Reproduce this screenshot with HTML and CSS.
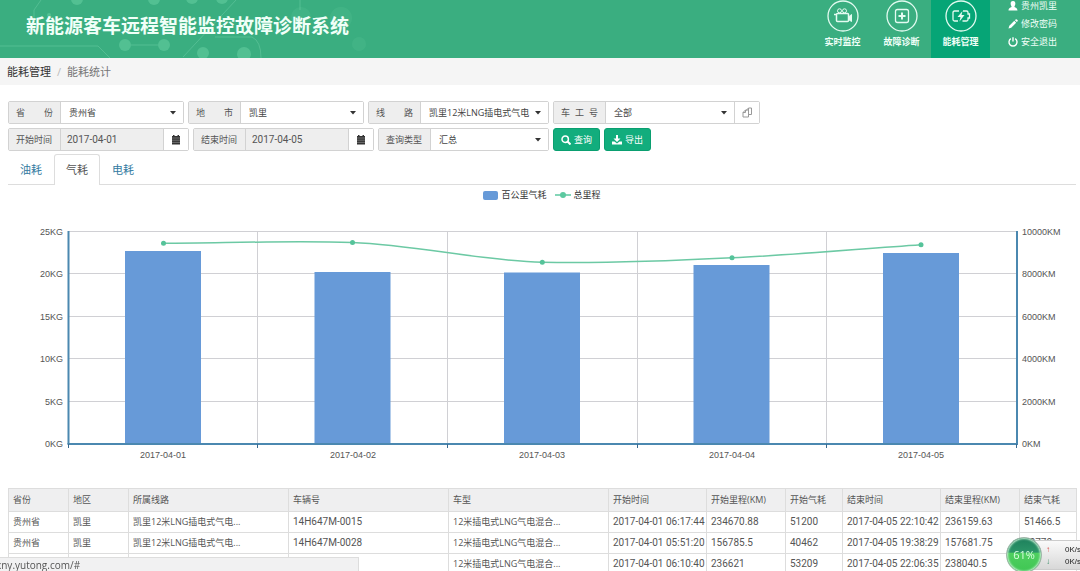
FILE: index.html
```html
<!DOCTYPE html>
<html lang="zh-CN">
<head>
    <meta charset="UTF-8">
    <meta name="viewport" content="width=device-width, initial-scale=1.0">
    <title>新能源客车远程智能监控故障诊断系统</title>
    <link rel="stylesheet" href="styles.css">
</head>
<body>

    <header class="header">
        <svg class="circuit" width="400" height="58" viewBox="0 0 400 58" aria-hidden="true">
            <g fill="none" stroke="#8ee0bd" stroke-opacity=".3">
                <path d="M34 20V10L41 0M0 46H98L110 58M131 45H158M183 57L236 0M215 37H252Q261 41 261 58M300 10V0"/>
            </g>
            <g fill="#7adcb0" fill-opacity=".38">
                <circle cx="77" cy="-1" r="6"/>
                <circle cx="154" cy="-1" r="6"/>
                <circle cx="192" cy="-2" r="6"/>
                <circle cx="222" cy="-2" r="6"/>
                <circle cx="49" cy="15" r="2"/>
                <circle cx="125" cy="45" r="6"/>
                <circle cx="164" cy="45" r="6"/>
                <circle cx="203" cy="53" r="6"/>
                <circle cx="244" cy="54" r="7"/>
            </g>
            <g fill="#7adcb0" fill-opacity=".12">
                <circle cx="301" cy="17" r="10"/>
                <circle cx="341" cy="18" r="11"/>
                <circle cx="359" cy="44" r="7"/>
            </g>
        </svg>
        <h1>新能源客车远程智能监控故障诊断系统</h1>

        <nav class="main-nav">
            <a href="#">
                <svg width="32" height="32" viewBox="0 0 32 32" fill="none" stroke="#e4fbf1">
                    <circle cx="16" cy="16" r="15" stroke-width="1.3"/>
                    <circle cx="12.500" cy="10.800" r="2"/>
                    <circle cx="17.500" cy="10.800" r="2"/>
                    <rect x="9.500" y="13.500" width="12" height="8" rx="1" stroke-width="1.500"/>
                    <path d="M21.500 17L24.500 14.500V21.500L21.500 19.500" fill="#e4fbf1"/>
                    <path d="M7 14.500H9.500" stroke-width="1.500"/>
                </svg>
                <span>实时监控</span>
            </a>
            <a href="#">
                <svg width="32" height="32" viewBox="0 0 32 32" fill="none" stroke="#e4fbf1">
                    <circle cx="16" cy="16" r="15" stroke-width="1.3"/>
                    <rect x="9.500" y="9.500" width="13" height="13" rx="2" stroke-width="1.3"/>
                    <path d="M16 12.500V19.500M12.500 16H19.500" stroke-width="2"/>
                </svg>
                <span>故障诊断</span>
            </a>
            <a href="#" class="active">
                <svg width="32" height="32" viewBox="0 0 32 32" fill="none" stroke="#e4fbf1">
                    <circle cx="16" cy="16" r="15" stroke-width="1.3"/>
                    <path d="M14 11H9.500Q8 11 8 12.500V19.500Q8 21 9.500 21H13M18 11H21.500Q23 11 23 12.500V14H24.500V18H23V19.500Q23 21 21.500 21H17.500" stroke-width="1.3"/>
                    <path d="M17.500 11L12.500 17H15.500L14.500 21.500L19.500 15H16.500Z" fill="#e4fbf1" stroke="none"/>
                </svg>
                <span>能耗管理</span>
            </a>
        </nav>

        <div class="user-menu">
            <a href="#">
                <svg width="10" height="10" viewBox="0 0 10 10" fill="#fff"><path d="M5 0C7 0 7.600 1.500 7.300 3.200C7.100 4.500 6.500 5 6.400 5.600C6.500 6.800 9.500 6.500 9.500 9.500H.5C.5 6.500 3.500 6.800 3.600 5.600C3.500 5 2.900 4.500 2.700 3.200C2.400 1.500 3 0 5 0Z"/></svg>
                贵州凯里
            </a>
            <a href="#">
                <svg width="10" height="10" viewBox="0 0 10 10" fill="#fff"><path d="M.5 9.500L1.300 6.800L6.300 1.800L8.200 3.700L3.200 8.700ZM6.900 1.200L7.900.3Q8.400 0 8.900.500L9.500 1.100Q10 1.600 9.600 2.200L8.800 3.100Z"/></svg>
                修改密码
            </a>
            <a href="#">
                <svg width="10" height="10" viewBox="0 0 10 10" fill="none" stroke="#fff" stroke-width="1.400"><path d="M2.800 1.700A4 4 0 1 0 7.200 1.700M5 .3V4.500"/></svg>
                安全退出
            </a>
        </div>
    </header>

    <!-- 面包屑 -->
    <div class="breadcrumb">
        <a href="#">能耗管理</a>
        <span class="sep">/</span>
        <span>能耗统计</span>
    </div>

    <!-- 查询条件 -->
    <form class="filters">
        <div class="filter-row">
            <div class="group">
                <label for="province"><span>省</span><span>份</span></label>
                <select id="province"><option>贵州省</option></select>
            </div>
            <div class="group">
                <label for="city"><span>地</span><span>市</span></label>
                <select id="city"><option>凯里</option></select>
            </div>
            <div class="group">
                <label for="line"><span>线</span><span>路</span></label>
                <select id="line" class="w-line"><option>凯里12米LNG插电式气电</option></select>
            </div>
            <div class="group">
                <label for="bus"><span>车</span><span>工</span><span>号</span></label>
                <select id="bus" class="w-bus"><option>全部</option></select>
                <button type="button" class="addon" aria-label="复制">
                    <svg width="11" height="11" viewBox="0 0 11 11" fill="none" stroke="#999"><path d="M4.500 3.500V3L6.500 1H9.500V7.500H7M1 5.500L3.500 3H6.500V10H1ZM3.500 3V5.500H1M6.500 1V3"/></svg>
                </button>
            </div>
        </div>
        <div class="filter-row">
            <div class="group">
                <label for="start">开始时间</label>
                <input type="text" id="start" value="2017-04-01" readonly>
                <button type="button" class="addon" aria-label="选择开始时间">
                    <svg width="10" height="10" viewBox="0 0 10 10"><path d="M1 1H2V0H3.500V1H6.500V0H8V1H9V9.500H1Z" fill="#333"/><path d="M1 3H9M1 5.200H9M1 7.400H9" stroke="#aaa" stroke-width=".5"/></svg>
                </button>
            </div>
            <div class="group">
                <label for="end">结束时间</label>
                <input type="text" id="end" value="2017-04-05" readonly>
                <button type="button" class="addon" aria-label="选择结束时间">
                    <svg width="10" height="10" viewBox="0 0 10 10"><path d="M1 1H2V0H3.500V1H6.500V0H8V1H9V9.500H1Z" fill="#333"/><path d="M1 3H9M1 5.200H9M1 7.400H9" stroke="#aaa" stroke-width=".5"/></svg>
                </button>
            </div>
            <div class="group">
                <label for="type">查询类型</label>
                <select id="type" class="w-type"><option>汇总</option></select>
            </div>
            <button type="button" class="btn">
                <svg width="10" height="10" viewBox="0 0 10 10" fill="none" stroke="#fff"><circle cx="4.200" cy="4.200" r="3.200" stroke-width="1.500"/><path d="M6.500 6.500L9.500 9.500" stroke-width="2"/></svg>
                查询
            </button>
            <button type="button" class="btn">
                <svg width="10" height="10" viewBox="0 0 10 10" fill="#fff"><path d="M4 0H6V3.500H8.500L5 7L1.500 3.500H4ZM0 6.500H2.500L5 8.500L7.500 6.500H10V9.500H0Z"/></svg>
                导出
            </button>
        </div>
    </form>

    <nav class="tabs">
        <a href="#">油耗</a>
        <a href="#" class="active">气耗</a>
        <a href="#">电耗</a>
    </nav>

    <!-- 图表 -->
    <div class="legend">
        <span class="item"><i class="swatch"></i>百公里气耗</span>
        <span class="item">
            <svg width="16" height="8" viewBox="0 0 16 8"><path d="M0 4H16" stroke="#5cc9a0" stroke-width="1.500"/><circle cx="8" cy="4" r="3" fill="#5cc9a0"/></svg>
            总里程
        </span>
    </div>
    <svg class="chart" viewBox="0 0 1080 260">
        <g class="grid">
            <path d="M68 27.500H1017M68 69.500H1017M68 112.500H1017M68 154.500H1017M68 197.500H1017"/>
            <path d="M257.500 27V240M447.500 27V240M637.500 27V240M826.500 27V240"/>
        </g>
        <g class="bars">
            <rect x="125" y="47" width="76" height="193"/>
            <rect x="314.500" y="68" width="76" height="172"/>
            <rect x="504" y="68.500" width="76" height="171.500"/>
            <rect x="693.500" y="61" width="76" height="179"/>
            <rect x="883" y="49" width="76" height="191"/>
        </g>
        <g class="axis">
            <path d="M68.500 27V240M1017 27V240" stroke-width="2"/>
            <path d="M67.500 240H1018" stroke-width="2"/>
            <path class="ticks" d="M68.500 240V244M257.500 240V244M447.500 240V244M637.500 240V244M826.500 240V244M1016.500 240V244"/>
        </g>
        <path class="mileage" d="M163.500 39.300C226 39 290 36.500 352.500 38.500C416 41 479 56.500 542.300 58.300C606 59.500 669 57 732 53.800C795 51 858 45 921 40.700"/>
        <g class="points">
            <circle cx="163.500" cy="39.300" r="2.500"/>
            <circle cx="352.500" cy="38.500" r="2.500"/>
            <circle cx="542.300" cy="58.300" r="2.500"/>
            <circle cx="732" cy="53.800" r="2.500"/>
            <circle cx="921" cy="40.700" r="2.500"/>
        </g>
        <g class="labels left">
            <text x="63" y="31">25KG</text>
            <text x="63" y="73">20KG</text>
            <text x="63" y="116">15KG</text>
            <text x="63" y="158">10KG</text>
            <text x="63" y="201">5KG</text>
            <text x="63" y="243">0KG</text>
        </g>
        <g class="labels">
            <text x="1022" y="31">10000KM</text>
            <text x="1022" y="73">8000KM</text>
            <text x="1022" y="116">6000KM</text>
            <text x="1022" y="158">4000KM</text>
            <text x="1022" y="201">2000KM</text>
            <text x="1022" y="243">0KM</text>
        </g>
        <g class="labels dates">
            <text x="163" y="254">2017-04-01</text>
            <text x="353" y="254">2017-04-02</text>
            <text x="542" y="254">2017-04-03</text>
            <text x="732" y="254">2017-04-04</text>
            <text x="921" y="254">2017-04-05</text>
        </g>
    </svg>

    <!-- 明细表 -->
    <div class="table-wrap">
        <table>
            <colgroup>
                <col class="c-area"><col class="c-area"><col class="c-long"><col class="c-long"><col class="c-long">
                <col class="c-time"><col class="c-km"><col class="c-gas"><col class="c-time"><col class="c-km"><col class="c-gas">
            </colgroup>
            <thead>
                <tr>
                    <th>省份</th><th>地区</th><th>所属线路</th><th>车辆号</th><th>车型</th><th>开始时间</th>
                    <th>开始里程(KM)</th><th>开始气耗</th><th>结束时间</th><th>结束里程(KM)</th><th>结束气耗</th>
                </tr>
            </thead>
            <tbody>
                <tr>
                    <td>贵州省</td><td>凯里</td><td>凯里12米LNG插电式气电...</td><td class="num">14H647M-0015</td><td>12米插电式LNG气电混合...</td><td class="num">2017-04-01 06:17:44</td>
                    <td class="num">234670.88</td><td class="num">51200</td><td class="num">2017-04-05 22:10:42</td><td class="num">236159.63</td><td class="num">51466.5</td>
                </tr>
                <tr>
                    <td>贵州省</td><td>凯里</td><td>凯里12米LNG插电式气电...</td><td class="num">14H647M-0028</td><td>12米插电式LNG气电混合...</td><td class="num">2017-04-01 05:51:20</td>
                    <td class="num">156785.5</td><td class="num">40462</td><td class="num">2017-04-05 19:38:29</td><td class="num">157681.75</td><td class="num">40770</td>
                </tr>
                <tr>
                    <td></td><td></td><td></td><td class="num"></td><td>12米插电式LNG气电混合...</td><td class="num">2017-04-01 06:10:40</td>
                    <td class="num">236621</td><td class="num">53209</td><td class="num">2017-04-05 22:06:35</td><td class="num">238040.5</td><td class="num"></td>
                </tr>
            </tbody>
        </table>
    </div>

    <div class="status-bar">xny.yutong.com/#</div>

    <div class="monitor">
        <div class="ball">61%</div>
        <div class="speed">
            <span><b class="up">↑</b>0K/s</span>
            <span><b class="down">↓</b>0K/s</span>
        </div>
    </div>

</body>
</html>
```
FILE: styles.css
```css
* {margin: 0; padding: 0; box-sizing: border-box;}

body {
    min-height: 100vh;
    overflow: hidden;
    background: #fff;
    color: #555;
    font-family: "Open Sans", "Noto Sans CJK SC", sans-serif;
    font-size: 9px;
    line-height: 12px;
}

a {color: inherit; text-decoration: none;}

svg {flex: none; display: block;}

/* 顶部 */
.header {
    position: relative;
    display: flex;
    height: 58px;
    background: #3aae80;
    color: #f0fff8;
}

.circuit {
    position: absolute;
    left: 0;
    top: 0;
}

.header h1 {
    position: relative;
    flex: 1;
    padding-left: 26px;
    font-size: 19px;
    line-height: 52px;
    font-weight: 700;
    white-space: nowrap;
}

.main-nav {display: flex;}

.main-nav a {
    display: flex;
    flex-direction: column;
    align-items: center;
    gap: 4px;
    width: 59px;
    font-weight: 700;
}

.main-nav a.active {background: #06a576;}

.user-menu {
    display: flex;
    flex-direction: column;
    gap: 6px;
    width: 90px;
    padding-left: 18px;
}

.user-menu a {
    display: flex;
    align-items: center;
    gap: 3px;
}

/* 面包屑 */
.breadcrumb {
    display: flex;
    gap: 6px;
    padding: 6px 7px 5px;
    background: #f5f5f5;
    color: #777;
    font-size: 11px;
    line-height: 16px;
}

.breadcrumb a {color: #333;}

.breadcrumb .sep {color: #bbb;}

/* 查询条件 */
.filters {
    display: flex;
    flex-direction: column;
    gap: 4px;
    padding: 16px 8px 3px;
}

.filter-row {display: flex; gap: 4px;}

.group {
    display: flex;
    height: 23px;
    border: 1px solid #d2d2d2;
    border-radius: 2px;
}

.group label {
    display: flex;
    justify-content: space-between;
    align-items: center;
    width: 52px;
    padding: 0 7px;
    background: #eee;
    border-right: 1px solid #d2d2d2;
}

.group select,
.group input {
    width: 122px;
    border: none;
    border-radius: 0;
    outline: none;
    padding: 0 8px;
    color: #444;
    font-family: inherit;
    font-size: 9px;
}

.group select {
    appearance: none;
    background: #fff url("data:image/svg+xml,%3Csvg xmlns='http://www.w3.org/2000/svg' width='6' height='4'%3E%3Cpath d='M0 0H6L3 3.500Z' fill='%23333'/%3E%3C/svg%3E") no-repeat right 7px center;
}

.group .w-line {width: 127px;}
.group .w-bus {width: 128px;}
.group .w-type {width: 117px;}

.group input {
    width: 102px;
    padding: 0 6px;
    background: #eee;
    color: #555;
    font-family: Roboto, sans-serif;
    font-size: 10px;
}

.addon {
    display: flex;
    justify-content: center;
    align-items: center;
    width: 25px;
    background: #fff;
    border: none;
    border-left: 1px solid #d2d2d2;
}

.btn {
    display: flex;
    justify-content: center;
    align-items: center;
    gap: 3px;
    width: 47px;
    height: 23px;
    background: #12ad7d;
    border: 1px solid #0a9f70;
    border-radius: 3px;
    color: #fff;
    font-family: inherit;
    font-size: 9px;
    cursor: pointer;
}

/* 标签页 */
.tabs {
    display: flex;
    margin: 0 4px 0 8px;
    border-bottom: 1px solid #ddd;
    color: #337a9f;
    font-size: 11px;
    line-height: 16px;
}

.tabs a {
    padding: 7px 11px;
    margin-bottom: -1px;
    border: 1px solid transparent;
    border-bottom: none;
    border-radius: 3px 3px 0 0;
}

.tabs a.active {
    background: #fff;
    border-color: #ddd;
    color: #555;
}

/* 图表 */
.legend {
    display: flex;
    justify-content: center;
    gap: 8px;
    padding: 4px 0 3px 4px;
    color: #333;
}

.legend .item {
    display: flex;
    align-items: center;
    gap: 3px;
}

.swatch {
    width: 15px;
    height: 9px;
    border-radius: 2px;
    background: #679ad8;
}

.chart {width: 100%;}

.grid path {fill: none; stroke: #d0d0d4;}

.bars {fill: #679ad8;}

.axis path {fill: none; stroke: #4b88b0;}

.axis .ticks {stroke: #3a6a90;}

.mileage {fill: none; stroke: #6cc9a4; stroke-width: 1.500;}

.points {fill: #55c39a;}

.labels {
    fill: #555;
    font-family: "Liberation Sans", Arial, sans-serif;
    font-size: 9px;
}

.left {text-anchor: end;}

.dates {text-anchor: middle;}

/* 明细表 */
.table-wrap {padding: 24px 4px 0 8px;}

table {
    width: 100%;
    table-layout: fixed;
    border-collapse: collapse;
}

.c-area {width: 60px;}
.c-long {width: 160px;}
.c-time {width: 98px;}
.c-km {width: 79px;}
.c-gas {width: 57px;}

th, td {
    height: 21px;
    padding: 0 4px;
    border: 1px solid #ddd;
    text-align: left;
    font-weight: 400;
    white-space: nowrap;
}

th {
    height: 23px;
    background: #efeff0;
}

.num {
    font-family: Roboto, sans-serif;
    font-size: 10px;
}

/* 浏览器状态栏 */
.status-bar {
    position: fixed;
    left: 0;
    bottom: 0;
    width: 359px;
    height: 14px;
    background: #f1f1f2;
    border-top: 1px solid #ddd;
    border-right: 1px solid #ddd;
    font-size: 10px;
    line-height: 14px;
    text-indent: -4px;
}

/* 加速球 */
.monitor {
    position: fixed;
    right: 0;
    bottom: 0;
    display: flex;
    align-items: center;
    width: 74px;
    height: 33px;
}

.ball {
    z-index: 1;
    flex: none;
    width: 36px;
    height: 36px;
    border: 1px solid #9fb5a8;
    border-radius: 50%;
    box-shadow: inset 0 0 2px 1px #c8f0d4;
    background: linear-gradient(#1d7f5c, #2c9668 42%, #4fcf60 44%, #3fc653);
    color: #d8ffe0;
    font-size: 11px;
    line-height: 34px;
    text-align: center;
}

.speed {
    display: flex;
    flex-direction: column;
    flex: none;
    width: 62px;
    height: 30px;
    margin-left: -18px;
    padding: 3px 0 0 21px;
    background: linear-gradient(#fafafa, #d8d8d8);
    border: 1px solid #ccc;
    color: #222;
    font-family: "Liberation Sans", sans-serif;
    font-size: 8px;
    white-space: nowrap;
}

.speed span {display: flex; gap: 15px;}

.up {color: #d9534f;}

.down {color: #3c8f6a;}
```
